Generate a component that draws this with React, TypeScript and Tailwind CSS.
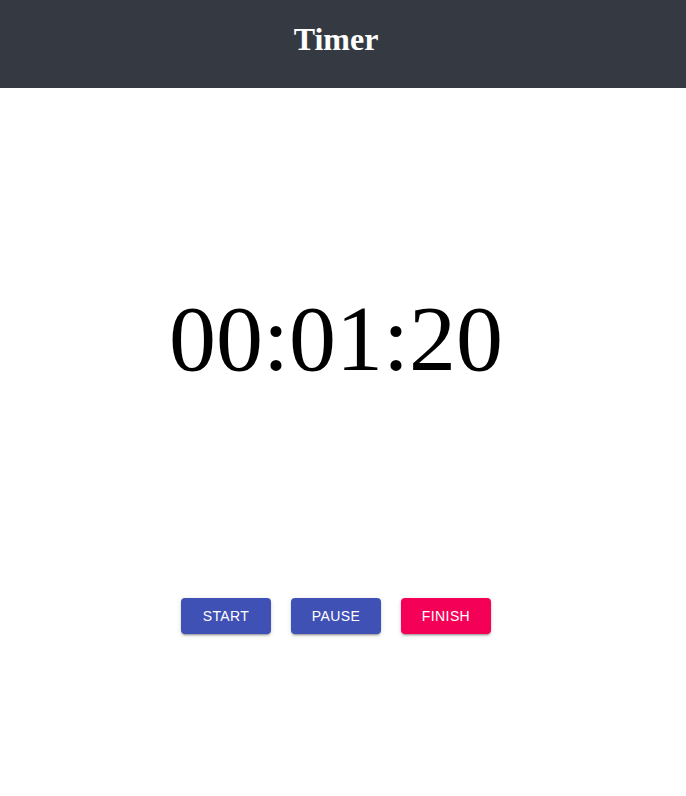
export default function App() {
  return (
    <div className="min-h-[796px] bg-white font-['Liberation_Serif',serif]">
      {/* Header */}
      <header className="bg-[#353a42]">
        <div className="flex h-[88px] w-[672px] items-center justify-center pb-[10px]">
          <h1 className="text-[32px] font-bold text-white">Timer</h1>
        </div>
      </header>

      <main className="w-[672px]">
        {/* Clock */}
        <div className="mt-[195px] text-center text-[94px] leading-[110px] text-black">
          00:01:20
        </div>

        {/* Controls */}
        <div className="mt-[205px] flex justify-center gap-5 font-['Liberation_Sans',Arial,sans-serif]">
          <button className="h-9 w-[90px] rounded bg-[#3f51b5] text-sm uppercase tracking-[0.4px] text-white shadow-[0_3px_1px_-2px_rgba(0,0,0,0.2),0_2px_2px_0_rgba(0,0,0,0.14),0_1px_5px_0_rgba(0,0,0,0.12)]">
            Start
          </button>
          <button className="h-9 w-[90px] rounded bg-[#3f51b5] text-sm uppercase tracking-[0.4px] text-white shadow-[0_3px_1px_-2px_rgba(0,0,0,0.2),0_2px_2px_0_rgba(0,0,0,0.14),0_1px_5px_0_rgba(0,0,0,0.12)]">
            Pause
          </button>
          <button className="h-9 w-[90px] rounded bg-[#f50057] text-sm uppercase tracking-[0.4px] text-white shadow-[0_3px_1px_-2px_rgba(0,0,0,0.2),0_2px_2px_0_rgba(0,0,0,0.14),0_1px_5px_0_rgba(0,0,0,0.12)]">
            Finish
          </button>
        </div>
      </main>
    </div>
  );
}
